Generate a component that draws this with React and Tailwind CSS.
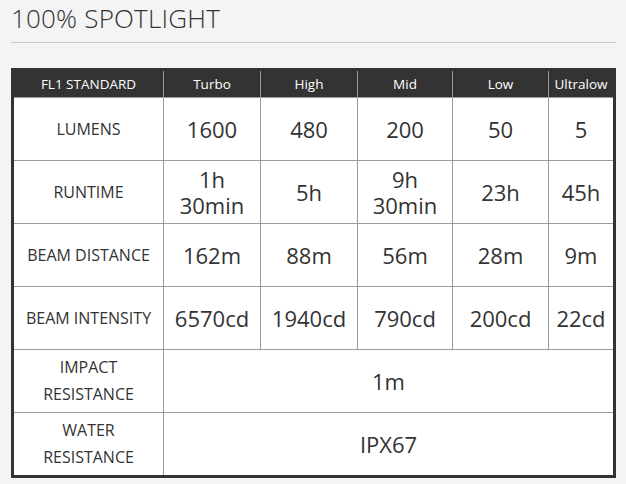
const cols = ['Turbo', 'High', 'Mid', 'Low', 'Ultralow'];

const rows = [
  { label: 'LUMENS', values: ['1600', '480', '200', '50', '5'] },
  { label: 'RUNTIME', values: [['1h', '30min'], '5h', ['9h', '30min'], '23h', '45h'] },
  { label: 'BEAM DISTANCE', values: ['162m', '88m', '56m', '28m', '9m'] },
  { label: 'BEAM INTENSITY', values: ['6570cd', '1940cd', '790cd', '200cd', '22cd'] },
];

const wide = [
  { label: ['IMPACT', 'RESISTANCE'], value: '1m' },
  { label: ['WATER', 'RESISTANCE'], value: 'IPX67' },
];

function Value({ v }) {
  if (Array.isArray(v)) {
    return (
      <div className="leading-[26px]">
        {v.map((line) => (
          <div key={line}>{line}</div>
        ))}
      </div>
    );
  }
  return <div>{v}</div>;
}

export default function App() {
  return (
    <div className="min-h-[484px] bg-[#f4f4f4] pl-[11px] pr-[10px] font-['Open_Sans',sans-serif] text-[#333]">
      <h1 className="pt-[5px] pb-[11px] text-[26px] font-light leading-[26px] tracking-[0.2px] border-b border-[#c9c9c9]">
        100% SPOTLIGHT
      </h1>

      <div className="mt-[25px] border-[3px] border-[#333] bg-[#9a9a9a]">
        <div className="grid grid-cols-[149px_96px_96px_94px_95px_64px] gap-px">
          <div className="h-[26px] bg-[#333] flex items-center justify-center text-white text-[13.5px]">
            FL1 STANDARD
          </div>
          {cols.map((c) => (
            <div key={c} className="h-[26px] bg-[#333] flex items-center justify-center text-white text-[13.5px]">
              {c}
            </div>
          ))}

          {rows.map((r) => (
            <div key={r.label} className="contents">
              <div className="h-[62px] bg-white flex items-center justify-center text-[16px]">
                {r.label}
              </div>
              {r.values.map((v, i) => (
                <div key={i} className="h-[62px] bg-white flex items-center justify-center text-center text-[22px] leading-[26px]">
                  <Value v={v} />
                </div>
              ))}
            </div>
          ))}

          {wide.map((r) => (
            <div key={r.value} className="contents">
              <div className="h-[62px] bg-white flex flex-col items-center justify-center text-[16px] leading-[27px]">
                {r.label.map((l) => (
                  <div key={l}>{l}</div>
                ))}
              </div>
              <div className="col-span-5 h-[62px] bg-white flex items-center justify-center text-[22px]">
                {r.value}
              </div>
            </div>
          ))}
        </div>
      </div>
    </div>
  );
}
